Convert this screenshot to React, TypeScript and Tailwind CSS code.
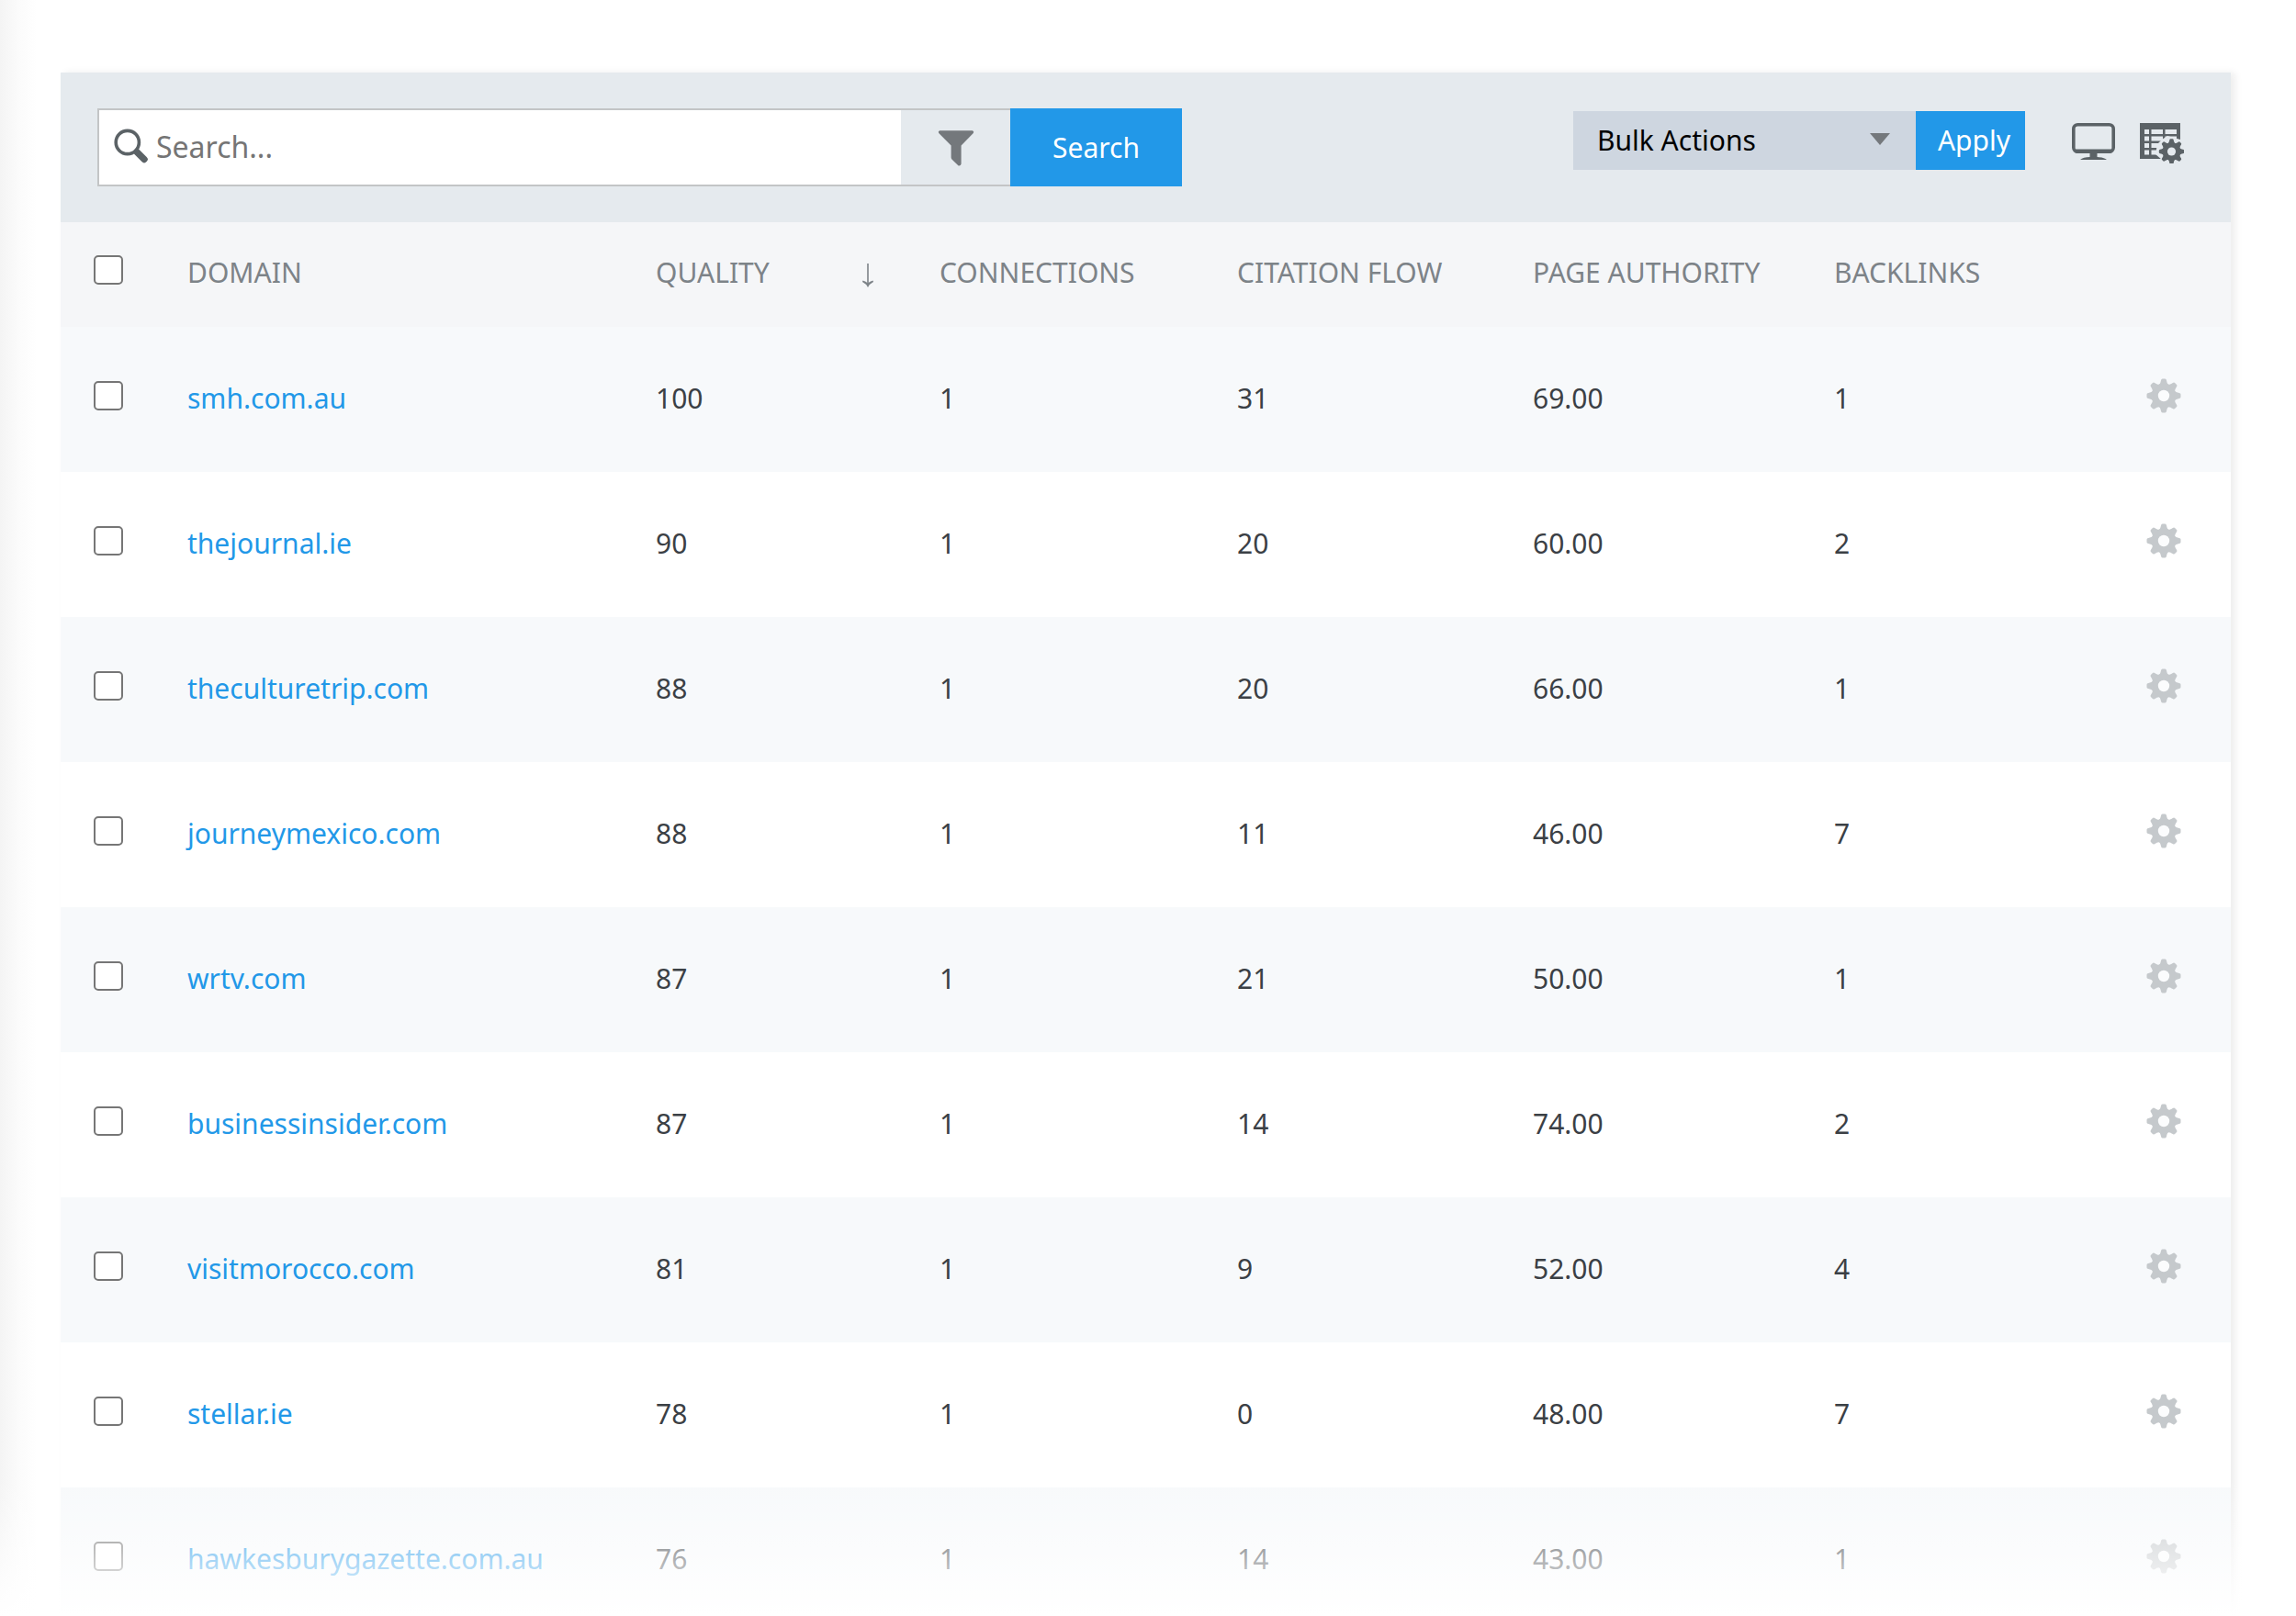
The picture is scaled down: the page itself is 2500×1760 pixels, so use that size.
import { useState } from 'react';

interface Row {
  domain: string;
  quality: string;
  connections: string;
  citationFlow: string;
  pageAuthority: string;
  backlinks: string;
}

const ROWS: Row[] = [
  { domain: 'smh.com.au', quality: '100', connections: '1', citationFlow: '31', pageAuthority: '69.00', backlinks: '1' },
  { domain: 'thejournal.ie', quality: '90', connections: '1', citationFlow: '20', pageAuthority: '60.00', backlinks: '2' },
  { domain: 'theculturetrip.com', quality: '88', connections: '1', citationFlow: '20', pageAuthority: '66.00', backlinks: '1' },
  { domain: 'journeymexico.com', quality: '88', connections: '1', citationFlow: '11', pageAuthority: '46.00', backlinks: '7' },
  { domain: 'wrtv.com', quality: '87', connections: '1', citationFlow: '21', pageAuthority: '50.00', backlinks: '1' },
  { domain: 'businessinsider.com', quality: '87', connections: '1', citationFlow: '14', pageAuthority: '74.00', backlinks: '2' },
  { domain: 'visitmorocco.com', quality: '81', connections: '1', citationFlow: '9', pageAuthority: '52.00', backlinks: '4' },
  { domain: 'stellar.ie', quality: '78', connections: '1', citationFlow: '0', pageAuthority: '48.00', backlinks: '7' },
  { domain: 'hawkesburygazette.com.au', quality: '76', connections: '1', citationFlow: '14', pageAuthority: '43.00', backlinks: '1' },
];

const TEETH = [0, 45, 90, 135, 180, 225, 270, 315];

// Gear centred on 0,0 with a radius of 18.5
function GearShape({ hole }: { hole: string }) {
  return (
    <g>
      <circle r="13.2" fill="currentColor" />
      {TEETH.map((angle) => (
        <path
          key={angle}
          transform={`rotate(${angle})`}
          d="M-6 -11.6C-4 -12.4 -3.5 -14.5 -3 -16.8Q-2.7 -18.5 -1.4 -18.5H1.4Q2.7 -18.5 3 -16.8C3.5 -14.5 4 -12.4 6 -11.6Z"
          fill="currentColor"
        />
      ))}
      <circle r="6.2" className={hole} />
    </g>
  );
}

function SearchIcon() {
  return (
    <svg viewBox="0 0 38 38" className="mb-1 size-[38px] shrink-0 text-[#5b6266]" aria-hidden="true">
      <circle cx="14.8" cy="15" r="12.6" fill="none" stroke="currentColor" strokeWidth="3.6" />
      <path d="M25 25.500L33 33.500" stroke="currentColor" strokeWidth="7.4" strokeLinecap="round" />
    </svg>
  );
}

function FilterIcon() {
  return (
    <svg viewBox="0 0 40 40" className="size-10 text-[#74787c]" aria-hidden="true">
      <path
        d="M2 1.2H38Q40 2.2 38.8 4L25.6 17.4V37.6Q25 40 22.6 39.4L15.4 32.4Q14.6 31.6 14.6 30.6V17.4L1.2 4Q0 2.2 2 1.2Z"
        fill="currentColor"
      />
    </svg>
  );
}

function SortArrow() {
  return (
    <svg viewBox="0 0 12 26" className="mt-2 h-[26px] w-3" aria-hidden="true">
      <path d="M6 0V22" stroke="currentColor" strokeWidth="1.6" />
      <path d="M0.500 18.500Q4 19.500 6 21.500Q8 19.500 11.500 18.500L12 20Q8 22 6 26Q4 22 0 20Z" fill="currentColor" />
    </svg>
  );
}

function MonitorIcon() {
  return (
    <svg viewBox="0 0 48 48" className="size-12" aria-hidden="true">
      <rect x="1.8" y="5.8" width="43.4" height="29.4" rx="4.5" fill="none" stroke="#5b6266" strokeWidth="3.6" />
      <path d="M4 32.5H43V35Q43 37 40 37H7Q4 37 4 35Z" fill="#5b6266" />
      <path d="M19.5 36H27.5V41C32 41.2 36 42 38 44H9C11 42 15 41.2 19.5 41Z" fill="#5b6266" />
    </svg>
  );
}

function TableGearIcon() {
  return (
    <svg viewBox="0 0 48 48" className="size-12 text-[#5b6266]" aria-hidden="true">
      <path d="M0 4H44V43H0Z" fill="currentColor" />
      <g fill="#e5eaee">
        <path d="M5 11H10V16H5ZM12.5 11H25V16H12.5ZM27.5 11H40V16H27.5Z" />
        <path d="M5 18.5H10V23.5H5ZM12.5 18.5H25V23.5H12.5ZM27.5 18.5H40V23.5H27.5Z" />
        <path d="M5 26H10V31H5ZM12.5 26H25V31H12.5Z" />
        <path d="M5 33.5H10V38.5H5ZM12.5 33.5H25V38.5H12.5Z" />
        <path d="M24 22L30 18L44 22V44H24L17 38L19 27Z" />
      </g>
      <g transform="translate(34.5 35) scale(0.74)">
        <GearShape hole="fill-[#e5eaee]" />
      </g>
    </svg>
  );
}

interface CheckProps {
  label: string;
  checked: boolean;
  onChange: () => void;
}

function Check({ label, checked, onChange }: CheckProps) {
  return (
    <input
      type="checkbox"
      aria-label={label}
      checked={checked}
      onChange={onChange}
      className="block size-8 appearance-none rounded-[5px] border-2 border-[#767676] bg-white checked:bg-[#2298e8]"
    />
  );
}

function Toolbar() {
  return (
    <div className="flex items-start justify-between gap-8 bg-[#e5eaee] pt-[39px] pr-[51px] pb-[39px] pl-10">
      <form className="flex h-[85px] w-full max-w-[1181px]" onSubmit={(e) => e.preventDefault()}>
        <div className="flex min-w-0 flex-1 border-2 border-r-0 border-[#c3c5c6]">
          <label className="flex min-w-0 flex-1 items-center gap-2 bg-white pl-4">
            <SearchIcon />
            <input
              type="text"
              aria-label="Search"
              placeholder="Search..."
              className="h-full min-w-0 flex-1 pb-0.5 text-[32px] text-gray-700 outline-none placeholder:text-[#757575]"
            />
          </label>
          <button type="button" aria-label="Filter" className="flex w-[119px] items-center justify-center">
            <FilterIcon />
          </button>
        </div>
        <button type="submit" className="w-[187px] bg-[#2298e8] text-[30px] text-white">
          Search
        </button>
      </form>

      <div className="mt-[3px] flex items-center">
        <div className="relative">
          <select
            aria-label="Bulk Actions"
            className="block h-16 w-[373px] appearance-none rounded-none bg-[#ced6e0] pb-0.5 pl-[26px] text-[30px] text-black"
          >
            <option>Bulk Actions</option>
          </select>
          <svg viewBox="0 0 22 14" className="pointer-events-none absolute top-6 right-7 h-[14px] w-[22px]" aria-hidden="true">
            <path d="M0 0H22L11 13Z" fill="#74787c" />
          </svg>
        </div>
        <button type="button" className="h-16 w-[119px] bg-[#2298e8] pb-0.5 pl-2 text-[30px] text-white">
          Apply
        </button>
        <button type="button" aria-label="Screen options" className="mt-0.5 ml-[51px]">
          <MonitorIcon />
        </button>
        <button type="button" aria-label="Table settings" className="mt-0.5 ml-[26px]">
          <TableGearIcon />
        </button>
      </div>
    </div>
  );
}

export default function App() {
  const [selected, setSelected] = useState<string[]>([]);

  const toggle = (domain: string) =>
    setSelected((prev) => (prev.includes(domain) ? prev.filter((d) => d !== domain) : [...prev, domain]));

  const allSelected = selected.length === ROWS.length;

  return (
    <div className="relative h-screen overflow-hidden bg-white pt-[79px] pr-[71px] pl-[66px] font-['Noto_Sans',sans-serif]">
      <div className="absolute inset-y-0 left-0 w-10 bg-linear-to-r from-[#f4f4f4] via-[#fbfbfb] to-white" />

      <main className="shadow-[5px_0_8px_rgba(0,0,0,0.07)]">
        <Toolbar />

        <table className="w-full table-fixed text-left text-[30px]">
          <colgroup>
            <col className="w-[102px]" />
            <col className="w-[510px]" />
            <col className="w-[309px]" />
            <col className="w-[324px]" />
            <col className="w-[322px]" />
            <col className="w-[328px]" />
            <col className="w-[344px]" />
            <col className="w-[124px]" />
          </colgroup>
          <thead>
            <tr className="h-[114px] bg-[#f5f6f8] text-[#7d8388] [&>th]:pb-[6px] [&>th]:pl-9 [&>th]:font-normal">
              <th>
                <div className="pb-1">
                  <Check
                    label="Select all"
                    checked={allSelected}
                    onChange={() => setSelected(allSelected ? [] : ROWS.map((r) => r.domain))}
                  />
                </div>
              </th>
              <th>DOMAIN</th>
              <th>
                <button type="button" className="flex w-full items-center justify-between pr-9">
                  QUALITY
                  <SortArrow />
                </button>
              </th>
              <th>CONNECTIONS</th>
              <th>CITATION FLOW</th>
              <th>PAGE AUTHORITY</th>
              <th>BACKLINKS</th>
              <th aria-label="Options" />
            </tr>
          </thead>
          <tbody>
            {ROWS.map((row) => (
              <tr key={row.domain} className="h-[158px] bg-white text-[#3b4045] odd:bg-[#f7f9fb] [&>td]:pb-1 [&>td]:pl-9">
                <td>
                  <div className="pb-1">
                    <Check
                      label={`Select ${row.domain}`}
                      checked={selected.includes(row.domain)}
                      onChange={() => toggle(row.domain)}
                    />
                  </div>
                </td>
                <td>
                  <a href="#" className="text-[#2298e8]">
                    {row.domain}
                  </a>
                </td>
                <td>{row.quality}</td>
                <td>{row.connections}</td>
                <td>{row.citationFlow}</td>
                <td>{row.pageAuthority}</td>
                <td>{row.backlinks}</td>
                <td>
                  <button
                    type="button"
                    aria-label={`Options for ${row.domain}`}
                    className="-ml-1 block pb-1 text-[#c5c9cc]"
                  >
                    <svg viewBox="-19 -19 38 38" className="size-[38px]" aria-hidden="true">
                      <GearShape hole="fill-[#fbfcfd]" />
                    </svg>
                  </button>
                </td>
              </tr>
            ))}
          </tbody>
        </table>
      </main>

      {/* Fade out the rows at the bottom of the view */}
      <div className="pointer-events-none absolute inset-x-0 bottom-0 h-[150px] bg-linear-to-b from-transparent to-white" />
    </div>
  );
}
